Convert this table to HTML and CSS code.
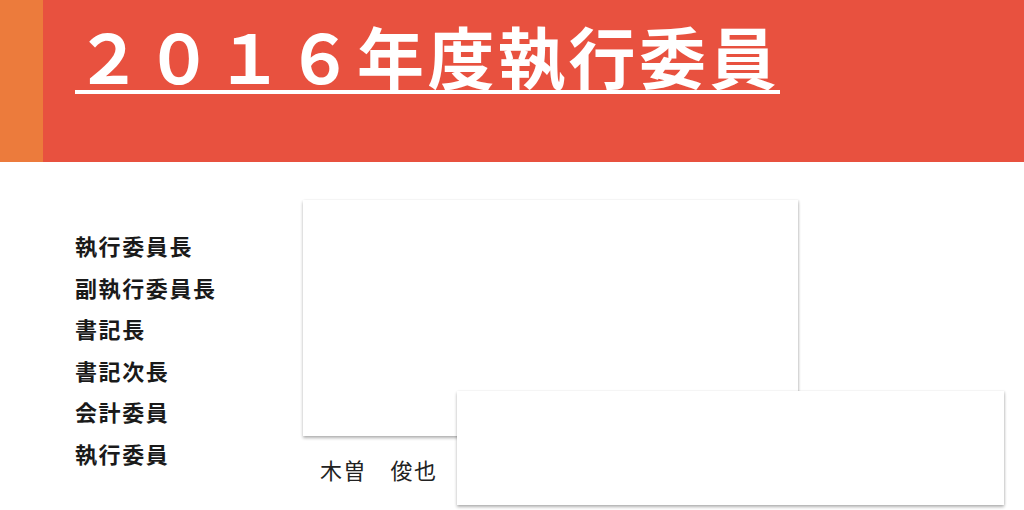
FILE: index.html
```html
<!DOCTYPE html>
<html lang="ja">
<head>
<meta charset="utf-8">
<title>2016年度執行委員</title>
<link rel="stylesheet" href="styles.css">
</head>
<body>
<header class="header">
  <div class="header-accent"></div>
  <div class="header-main">
    <h1 class="title">２０１６年度執行委員</h1>
  </div>
</header>
<main class="content">
  <ul class="roles">
    <li>執行委員長</li>
    <li>副執行委員長</li>
    <li>書記長</li>
    <li>書記次長</li>
    <li>会計委員</li>
    <li>執行委員</li>
  </ul>
  <section class="profile">
    <div class="card card-photo"></div>
    <p class="name">木曽　俊也</p>
  </section>
  <div class="card card-overlay"></div>
</main>
</body>
</html>
```

FILE: styles.css
```css
* { box-sizing: border-box; }
html, body { margin: 0; padding: 0; background: #fff; }
body {
  width: 1024px;
  height: 510px;
  overflow: hidden;
  font-family: "Noto Sans CJK JP", "Noto Sans", sans-serif;
  color: #111;
}
.header {
  display: flex;
  height: 162px;
}
.header-accent {
  width: 43px;
  background: #ec7b3c;
}
.header-main {
  flex: 1;
  background: #e8513f;
  padding-left: 32px;
  padding-top: 17px;
}
.title {
  margin: 0;
  display: inline-block;
  color: #fff;
  font-size: 67px;
  font-weight: 700;
  line-height: 76px;
  letter-spacing: 3.5px;
  text-decoration: underline;
  text-decoration-thickness: 4px;
  text-underline-offset: 6px;
}
.content {
  position: relative;
  display: flex;
  padding-left: 75px;
  padding-top: 38px;
}
.roles {
  list-style: none;
  margin: 0;
  padding: 0;
  padding-top: 25px;
  width: 228px;
}
.roles li {
  font-size: 22px;
  font-weight: 700;
  line-height: 41.6px;
  letter-spacing: 1.6px;
  color: #1a1a1a;
}
.profile {
  display: flex;
  flex-direction: column;
}
.card {
  background: #fff;
  box-shadow: 0 2px 3px rgba(0,0,0,0.3), 1px 0 2px rgba(0,0,0,0.08);
}
.card-photo {
  width: 495px;
  height: 236px;
}
.name {
  margin: 0;
  padding-left: 17px;
  padding-top: 19px;
  font-size: 22px;
  line-height: 28px;
  letter-spacing: 1.5px;
  color: #222;
}
.card-overlay {
  position: absolute;
  left: 457px;
  top: 229px;
  width: 547px;
  height: 114px;
}
```
